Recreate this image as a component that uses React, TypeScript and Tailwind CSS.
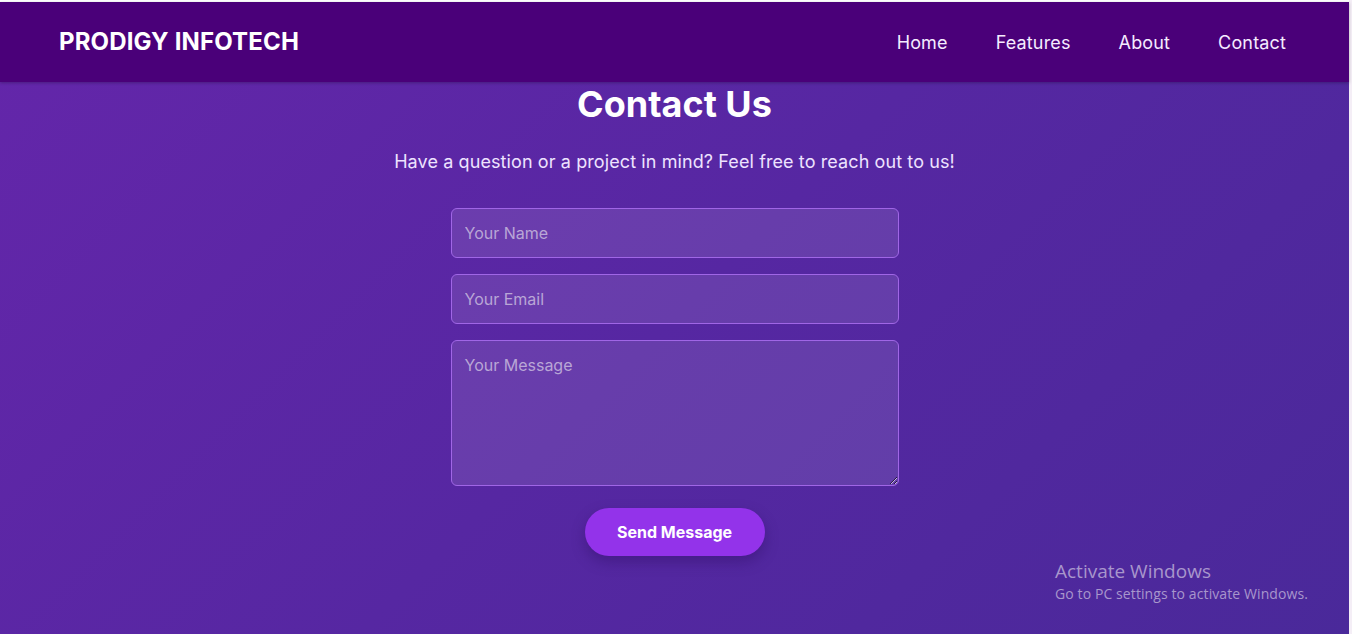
import type { ReactElement } from "react";

const NAV = ["Home", "Features", "About", "Contact"];

export default function App(): ReactElement {
  return (
    <div className="flex h-[634px] w-full overflow-hidden" style={{ fontFamily: "Inter, 'Noto Sans', sans-serif" }}>
      <div className="relative flex min-w-0 flex-1 flex-col border-t-2 border-white bg-[linear-gradient(135deg,#6426aa_0%,#5627a2_50%,#4a299a_100%)]">
        <header className="flex h-[80px] shrink-0 items-center justify-between bg-[#4a0079] pl-[59px] pr-[63px] shadow-[0_1px_3px_rgba(0,0,0,0.25)]">
          <span className="text-[24px] font-bold tracking-[0.15px] text-white">PRODIGY INFOTECH</span>
          <nav className="flex items-center gap-[48px]">
            {NAV.map((item) => (
              <a key={item} href="#" className="text-[18px] tracking-[0.15px] text-[#f5ecff]">
                {item}
              </a>
            ))}
          </nav>
        </header>

        <main className="flex flex-col items-center">
          <h1 className="mt-[2px] text-[36px] font-bold leading-[40px] text-white">Contact Us</h1>
          <p className="mt-[24px] text-[18px] leading-[28px] tracking-[0.1px] text-[#eee3ff]">
            Have a question or a project in mind? Feel free to reach out to us!
          </p>

          <form className="mt-[32px] flex w-[448px] flex-col gap-[16px]">
            <input
              type="text"
              placeholder="Your Name"
              className="h-[50px] w-full rounded-[6px] border border-[#a066e6] bg-white/10 px-[13px] text-[16px] text-white outline-none placeholder:text-[#b9a6d6]"
            />
            <input
              type="email"
              placeholder="Your Email"
              className="h-[50px] w-full rounded-[6px] border border-[#a066e6] bg-white/10 px-[13px] text-[16px] text-white outline-none placeholder:text-[#b9a6d6]"
            />
            <textarea
              placeholder="Your Message"
              className="h-[146px] w-full rounded-[6px] border border-[#a066e6] bg-white/10 px-[13px] py-[14px] text-[16px] leading-[20px] text-white outline-none placeholder:text-[#b9a6d6]"
            />
            <div className="mt-[6px] flex justify-center">
              <button
                type="button"
                className="h-[48px] w-[180px] rounded-full bg-[#9333ea] text-[16px] font-bold text-white shadow-[0_6px_14px_rgba(40,10,90,0.35)]"
              >
                Send Message
              </button>
            </div>
          </form>
        </main>

        <div
          className="absolute left-[1055px] top-[556px] text-[#a896cc]"
          style={{ fontFamily: "'Open Sans', 'Noto Sans', sans-serif" }}
        >
          <div className="text-[19px] leading-[26px]">Activate Windows</div>
          <div className="text-[14px] leading-[20px] tracking-[0.1px]">Go to PC settings to activate Windows.</div>
        </div>
      </div>
      <div className="w-[3px] shrink-0 bg-[#f4eef6]" />
    </div>
  );
}
